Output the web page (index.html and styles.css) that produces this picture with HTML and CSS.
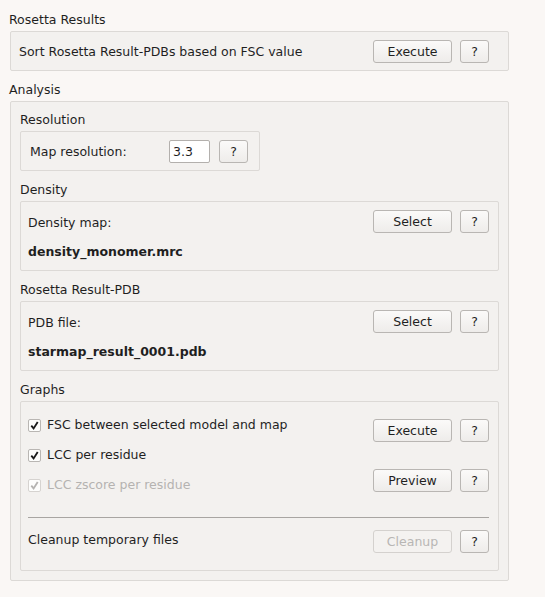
FILE: index.html
```html
<!DOCTYPE html>
<html>
<head>
<meta charset="utf-8">
<link rel="stylesheet" href="styles.css">
</head>
<body>
<div class="page">
  <div class="title">Rosetta Results</div>
  <div class="box top-box">
    <span class="text">Sort Rosetta Result-PDBs based on FSC value</span>
    <div class="btns">
      <button class="btn wide">Execute</button>
      <button class="btn help">?</button>
    </div>
  </div>

  <div class="title">Analysis</div>
  <div class="box analysis">
    <div class="title">Resolution</div>
    <div class="box res-box">
      <span class="text">Map resolution:</span>
      <div class="input">3.3</div>
      <button class="btn help">?</button>
    </div>

    <div class="title">Density</div>
    <div class="box file-box">
      <div class="file-row">
        <span class="text">Density map:</span>
        <div class="btns">
          <button class="btn wide">Select</button>
          <button class="btn help">?</button>
        </div>
      </div>
      <div class="file-name">density_monomer.mrc</div>
    </div>

    <div class="title">Rosetta Result-PDB</div>
    <div class="box file-box">
      <div class="file-row">
        <span class="text">PDB file:</span>
        <div class="btns">
          <button class="btn wide">Select</button>
          <button class="btn help">?</button>
        </div>
      </div>
      <div class="file-name">starmap_result_0001.pdb</div>
    </div>

    <div class="title">Graphs</div>
    <div class="box graphs">
      <div class="graph-top">
        <div class="checks">
          <label class="check"><span class="cb"><svg viewBox="0 0 12 12"><path d="M2.5 6.2 L5 9.2 L9.5 2.3" /></svg></span>FSC between selected model and map</label>
          <label class="check"><span class="cb"><svg viewBox="0 0 12 12"><path d="M2.5 6.2 L5 9.2 L9.5 2.3" /></svg></span>LCC per residue</label>
          <label class="check disabled"><span class="cb"><svg viewBox="0 0 12 12"><path d="M2.5 6.2 L5 9.2 L9.5 2.3" /></svg></span>LCC zscore per residue</label>
        </div>
        <div class="graph-btns">
          <div class="btns">
            <button class="btn wide">Execute</button>
            <button class="btn help">?</button>
          </div>
          <div class="btns">
            <button class="btn wide">Preview</button>
            <button class="btn help">?</button>
          </div>
        </div>
      </div>
      <div class="sep"></div>
      <div class="cleanup-row">
        <span class="text cleanup-text">Cleanup temporary files</span>
        <div class="btns">
          <button class="btn wide" disabled>Cleanup</button>
          <button class="btn help">?</button>
        </div>
      </div>
    </div>
  </div>
</div>
</body>
</html>
```

FILE: styles.css
```css
html, body {
  margin: 0;
  padding: 0;
  background: #faf7f5;
}
body {
  font-family: "DejaVu Sans", sans-serif;
  font-size: 12.5px;
  color: #1f1f1f;
  width: 545px;
  height: 597px;
  overflow: hidden;
}
.page {
  width: 499px;
  margin-left: 10px;
  padding-top: 12px;
}
.title {
  height: 16px;
  line-height: 16px;
  margin-left: -1px;
  margin-bottom: 3px;
}
.box + .title {
  margin-top: 11px;
}
.box {
  box-sizing: border-box;
  background: #f3f1ef;
  border: 1px solid #dcd9d6;
  border-radius: 2px;
}
.text {
  display: block;
  line-height: 16px;
  padding-top: 2px;
}
.btns {
  display: flex;
  gap: 8px;
  flex: none;
}
.btn {
  box-sizing: border-box;
  height: 23px;
  margin: 0;
  padding: 0;
  font-family: "DejaVu Sans", sans-serif;
  font-size: 12.5px;
  color: #1f1f1f;
  background: linear-gradient(#fbfaf9, #eeecea);
  border: 1px solid #b9b6b3;
  border-radius: 3px;
  line-height: 21px;
}
.btn.wide {
  width: 79px;
}
.btn.help {
  width: 29px;
}
.btn[disabled] {
  color: #b8b6b4;
  background: #f4f2f0;
  border-color: #d4d1ce;
}
.top-box {
  height: 40px;
  display: flex;
  align-items: center;
  justify-content: space-between;
  padding: 0 19px 0 8px;
}
.analysis {
  height: 480px;
  padding: 10px 9px 9px 9px;
}
.analysis .title {
  margin-left: 0;
}
.res-box {
  width: 240px;
  height: 40px;
  display: flex;
  align-items: center;
  padding-left: 9px;
}
.res-box .text {
  width: 139px;
}
.input {
  box-sizing: border-box;
  width: 41px;
  height: 23px;
  background: #ffffff;
  border: 1px solid #b3b0ad;
  border-radius: 2px;
  line-height: 21px;
  padding-left: 3px;
  margin-right: 9px;
}
.file-box {
  height: 70px;
  padding: 8px 9px 0 7px;
}
.file-row {
  display: flex;
  align-items: center;
  justify-content: space-between;
}
.file-name {
  font-weight: bold;
  line-height: 16px;
  margin-top: 11px;
}
.graphs {
  height: 170px;
  padding: 9px 9px 0 7px;
}
.graph-top {
  display: flex;
  justify-content: space-between;
  align-items: flex-start;
  height: 82px;
}
.checks {
  display: flex;
  flex-direction: column;
  gap: 14px;
  padding-top: 6px;
}
.check {
  display: flex;
  align-items: center;
  line-height: 16px;
  gap: 6px;
}
.cb {
  box-sizing: border-box;
  width: 13px;
  height: 13px;
  background: #fdfdfc;
  border: 1px solid #b9b6b3;
  border-radius: 2px;
  display: flex;
  align-items: center;
  justify-content: center;
}
.cb svg {
  width: 11px;
  height: 11px;
}
.cb path {
  fill: none;
  stroke: #1a1a1a;
  stroke-width: 2;
}
.check.disabled {
  color: #b5b3b1;
}
.check.disabled .cb {
  border-color: #d6d3d0;
}
.check.disabled .cb path {
  stroke: #b5b3b1;
}
.graph-btns {
  display: flex;
  flex-direction: column;
  gap: 27px;
  padding-top: 8px;
}
.sep {
  height: 1px;
  background: #a8a5a2;
  margin-top: 24px;
}
.cleanup-row {
  display: flex;
  justify-content: space-between;
  align-items: flex-start;
  margin-top: 12px;
}
.cleanup-text {
  margin-top: 0;
}
```
